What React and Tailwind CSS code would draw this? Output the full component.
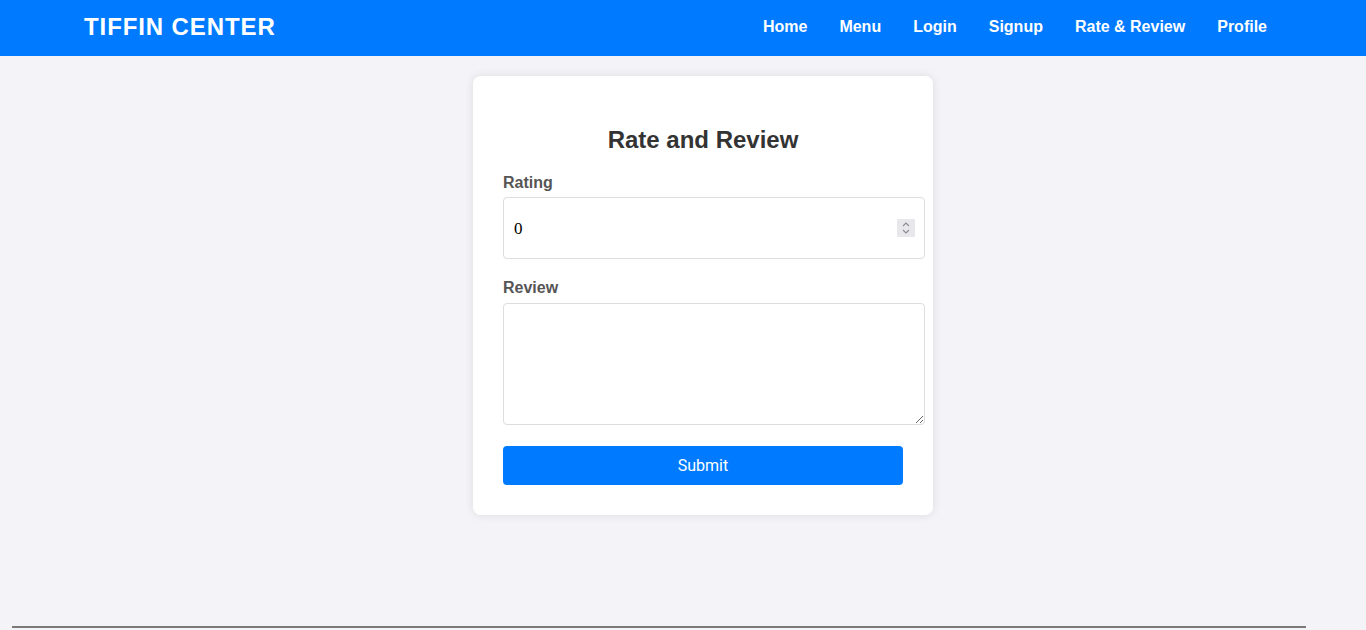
import React, { useState } from 'react';

const links = ['Home', 'Menu', 'Login', 'Signup', 'Rate & Review', 'Profile'];

const App = () => {
    const [rating, setRating] = useState('0');
    const [review, setReview] = useState('');

    return (
        <div className="min-h-[630px] bg-[#f4f4f8] font-['Liberation_Sans',Arial,sans-serif] flex flex-col">
            <header className="h-14 bg-[#007bff] flex items-center justify-between pl-[84px] pr-[83px] pb-[2px]">
                <div className="text-white text-[24px] font-bold tracking-[0.9px]">TIFFIN CENTER</div>
                <nav className="flex">
                    {links.map(l => (
                        <a key={l} href="#" className="px-4 text-white text-[16px] font-bold">{l}</a>
                    ))}
                </nav>
            </header>

            <main className="flex justify-center pt-5 pl-10">
                <div className="w-[460px] bg-white rounded-lg shadow-[0_0_10px_rgba(0,0,0,0.1)] p-[30px]">
                    <h2 className="mt-5 mb-5 text-center text-[24px] leading-7 font-bold text-[#333]">Rate and Review</h2>
                    <form onSubmit={e => e.preventDefault()}>
                        <label className="block text-[16px] leading-[18px] font-bold text-[#555]">Rating</label>
                        <div className="relative mt-[5px] w-[422px]">
                            <input
                                type="text"
                                value={rating}
                                onChange={e => setRating(e.target.value)}
                                className="block w-full h-[62px] px-[10px] pt-[2px] border border-[#ddd] rounded bg-white text-[17px] text-black font-['Liberation_Serif',serif] outline-none"
                            />
                            <div className="absolute right-[10px] top-[22px] w-[18px] h-[18px] bg-[#e8e8ec] flex items-center justify-center">
                                <svg width="10" height="14" viewBox="0 0 10 14" fill="none" stroke="#8a8a90" strokeWidth="1.1">
                                    <path d="M2 5 L5 2 L8 5" />
                                    <path d="M2 9 L5 12 L8 9" />
                                </svg>
                            </div>
                        </div>

                        <label className="block mt-5 text-[16px] leading-[18px] font-bold text-[#555]">Review</label>
                        <textarea
                            value={review}
                            onChange={e => setReview(e.target.value)}
                            className="block mt-[6px] w-[422px] h-[122px] p-[10px] border border-[#ddd] rounded bg-white text-[16px] outline-none"
                        />

                        <button
                            type="submit"
                            className="block mt-[21px] w-[400px] h-[39px] rounded bg-[#007bff] text-white text-[16px] font-['Roboto',sans-serif]"
                        >
                            Submit
                        </button>
                    </form>
                </div>
            </main>

            <div className="mt-auto pb-[2px] pl-3">
                <div className="w-[1294px] h-[2px] bg-[#7a7a7a]" />
            </div>
        </div>
    );
};

export default App;
